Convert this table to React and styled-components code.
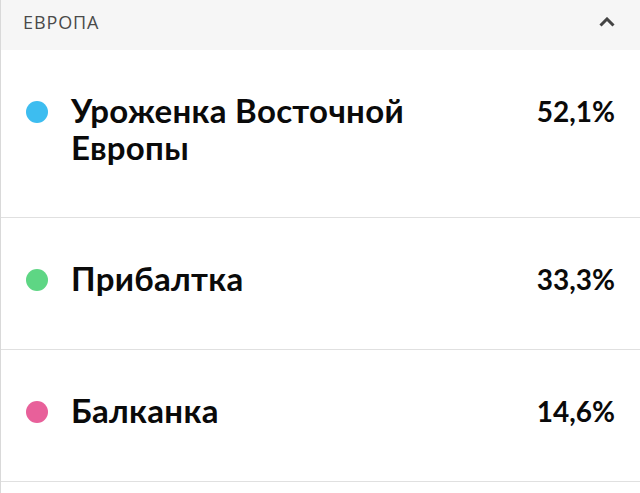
import styled, { createGlobalStyle } from "styled-components"

const GlobalStyle = createGlobalStyle`
    body {
        margin: 0;
        background: #ffffff;
        font-family: Lato, "Open Sans", sans-serif;
    }
`

const rows = [
    { name: "Уроженка Восточной Европы", value: "52,1%", color: "#3dbdf0" },
    { name: "Прибалтка", value: "33,3%", color: "#5ed684" },
    { name: "Балканка", value: "14,6%", color: "#e8609a" },
]

export default function App() {
    return (
        <Container>
            <GlobalStyle />
            <Header>
                <Title>ЕВРОПА</Title>
                <svg width="16" height="10" viewBox="0 0 16 10">
                    <path d="M1.5 8.5 L8 2 L14.5 8.5" fill="none" stroke="#444" strokeWidth="3" />
                </svg>
            </Header>
            {rows.map(r => (
                <Row key={r.name}>
                    <Dot color={r.color} />
                    <Name>{r.name}</Name>
                    <Value>{r.value}</Value>
                </Row>
            ))}
        </Container>
    )
}

const Container = styled.div`
    width: 640px;
    height: 493px;
    overflow: hidden;
    box-sizing: border-box;
    border-left: 1px solid #d9d9d9;
`

const Header = styled.div`
    height: 50px;
    background: #f6f6f6;
    display: flex;
    align-items: center;
    justify-content: space-between;
    padding: 0 25px 7px 22px;
    box-sizing: border-box;
`

const Title = styled.span`
    font-family: "Open Sans", sans-serif;
    font-size: 18px;
    letter-spacing: 0.9px;
    color: #4a4a4a;
`

const Row = styled.div`
    display: grid;
    grid-template-columns: 22px 1fr auto;
    column-gap: 23px;
    align-items: start;
    padding: 42px 25px 51px 25px;
    border-bottom: 1px solid #e0e0e0;
`

const Dot = styled.span`
    width: 22px;
    height: 22px;
    border-radius: 50%;
    background: ${props => props.color};
    margin-top: 9px;
`

const Name = styled.div`
    font-size: 33px;
    line-height: 37px;
    font-weight: 700;
    letter-spacing: 0.3px;
    color: #0a0a0a;
    max-width: 360px;
`

const Value = styled.div`
    font-size: 28px;
    line-height: 37px;
    font-weight: 700;
    color: #0a0a0a;
    margin-top: 1px;
`
